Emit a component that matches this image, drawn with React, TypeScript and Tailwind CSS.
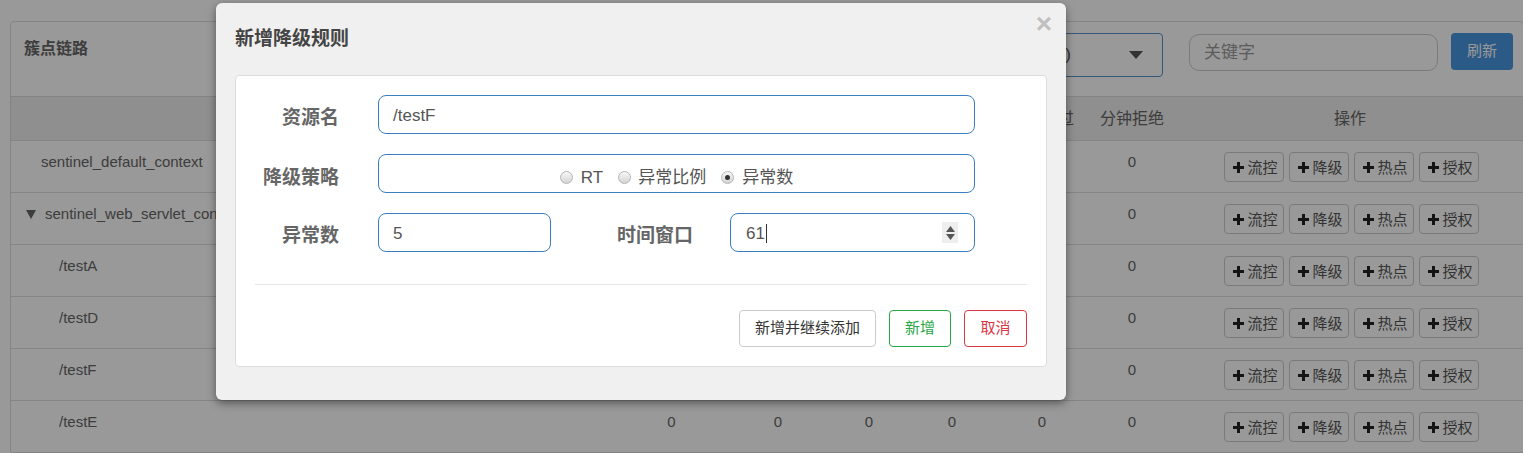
import React from "react";

const FONT = { fontFamily: '"Liberation Sans", "Noto Sans CJK SC", sans-serif' };

function PlusIcon() {
  return (
    <svg width="11" height="11" viewBox="0 0 11 11" className="shrink-0">
      <rect x="4" y="0" width="3" height="11" fill="#222" />
      <rect x="0" y="4" width="11" height="3" fill="#222" />
    </svg>
  );
}

function ActionBtn({ label }: { label: string }) {
  return (
    <div className="flex h-[30px] w-[60px] items-center gap-[4px] rounded-[4px] border border-[#ccc] bg-white pl-[8px] text-[15px] text-[#555]">
      <PlusIcon />
      <span className="leading-none">{label}</span>
    </div>
  );
}

type Row = { name: string; indent: "root" | "tree" | "child"; hidden: boolean };

const rows: Row[] = [
  { name: "sentinel_default_context", indent: "root", hidden: true },
  { name: "sentinel_web_servlet_context", indent: "tree", hidden: true },
  { name: "/testA", indent: "child", hidden: true },
  { name: "/testD", indent: "child", hidden: true },
  { name: "/testF", indent: "child", hidden: true },
  { name: "/testE", indent: "child", hidden: false },
];

const GRID = "grid grid-cols-[607px_107px_106px_76px_90px_90px_90px_1fr]";

function Radio({ checked }: { checked?: boolean }) {
  return (
    <span className="relative inline-flex h-[13px] w-[13px] shrink-0 items-center justify-center rounded-full border border-[#b5b5b5] bg-gradient-to-b from-[#f7f7f7] to-[#d4d4d4]">
      {checked && <span className="h-[5px] w-[5px] rounded-full bg-[#333]" />}
    </span>
  );
}

function Spinner() {
  return (
    <div className="absolute right-[16px] top-[8px] flex h-[21px] w-[16px] flex-col items-center justify-center gap-[2px] bg-[#eee]">
      <svg width="9" height="6" viewBox="0 0 9 6">
        <path d="M4.5 0 L9 6 L0 6 Z" fill="#555" />
      </svg>
      <svg width="9" height="6" viewBox="0 0 9 6">
        <path d="M0 0 L9 0 L4.5 6 Z" fill="#555" />
      </svg>
    </div>
  );
}

export default function App() {
  return (
    <div className="relative h-[453px] w-[1523px] overflow-hidden bg-white" style={FONT}>
      {/* background page */}
      <div className="pl-[10px] pt-[21px]">
        <div className="w-[1514px] rounded-[4px] border border-[#ddd] bg-white">
          <div className="flex h-[75px] items-start justify-between border-b border-[#ddd]">
            <div className="pl-[13px] pt-[16px] text-[16px] font-bold leading-[22px] text-[#666]">簇点链路</div>
            <div className="flex items-start pr-[10px] pt-[11px]">
              <div className="flex h-[44px] w-[300px] items-center justify-end rounded-[4px] border border-[#5791cc] pr-[19px] text-[17px] text-[#555]">
                <span className="mr-[58px] whitespace-nowrap">default (0.0.0.0:8720)</span>
                <svg width="14" height="8" viewBox="0 0 14 8" className="shrink-0">
                  <path d="M0 0 L14 0 L7 8 Z" fill="#555" />
                </svg>
              </div>
              <div className="ml-[26px] mt-[1px] flex h-[37px] w-[249px] items-center rounded-[10px] border border-[#ccc] pl-[14px] text-[17px] text-[#999]">
                关键字
              </div>
              <div className="ml-[13px] flex h-[37px] w-[62px] items-center justify-center rounded-[4px] bg-[#4896df] text-[15px] text-white">
                刷新
              </div>
            </div>
          </div>
          <div className={`${GRID} h-[44px] items-center border-b border-[#ddd] bg-[#eee] text-center text-[16px] text-[#666]`}>
            <div />
            <div />
            <div />
            <div />
            <div />
            <div>分钟通过</div>
            <div>分钟拒绝</div>
            <div>操作</div>
          </div>
          {rows.map((r) => (
            <div key={r.name} className={`${GRID} h-[52px] border-b border-[#ddd] text-[15px] leading-[20px] text-[#666]`}>
              <div
                className={`flex items-start whitespace-nowrap pt-[11px] ${
                  r.indent === "root" ? "pl-[30px]" : r.indent === "tree" ? "pl-[15px]" : "pl-[48px]"
                }`}
              >
                {r.indent === "tree" && (
                  <svg width="10" height="9" viewBox="0 0 10 9" className="mr-[9px] mt-[6px] shrink-0">
                    <path d="M0 0 L10 0 L5 9 Z" fill="#666" />
                  </svg>
                )}
                {r.name}
              </div>
              {[0, 1, 2, 3, 4].map((i) => (
                <div key={i} className="pt-[11px] text-center">{r.hidden ? "" : "0"}</div>
              ))}
              <div className="pt-[11px] text-center">0</div>
              <div className="flex justify-center gap-[5px] pl-[2px] pt-[11px]">
                <ActionBtn label="流控" />
                <ActionBtn label="降级" />
                <ActionBtn label="热点" />
                <ActionBtn label="授权" />
              </div>
            </div>
          ))}
        </div>
      </div>

      {/* overlay */}
      <div className="absolute inset-0 bg-black/40" />

      {/* modal */}
      <div className="absolute left-[216px] top-[3px] h-[397px] w-[850px] rounded-[6px] bg-[#f0f0f0] shadow-[0_3px_9px_rgba(0,0,0,0.45)]">
        <div className="absolute right-[14px] top-[6px] text-[28px] font-bold leading-[30px] text-[#c0c0c0]">×</div>
        <div className="px-[19px] pt-[21px]">
          <div className="h-[30px] text-[19px] font-bold leading-[30px] text-[#444]">新增降级规则</div>
        </div>
        <div className="mx-[19px] mt-[21px] h-[292px] rounded-[4px] border border-[#ddd] bg-white pt-[19px]">
          <div className="flex flex-col gap-[20px]">
            <div className="flex h-[39px] items-center">
              <div className="w-[103px] pt-[8px] text-right text-[19px] font-bold text-[#666]">资源名</div>
              <div className="ml-[39px] flex h-[39px] w-[597px] items-center rounded-[8px] border border-[#3b7ec0] pl-[14px] pt-[2px] text-[17px] text-[#555]">
                /testF
              </div>
            </div>
            <div className="flex h-[39px] items-center">
              <div className="w-[103px] pt-[9px] text-right text-[19px] font-bold text-[#666]">降级策略</div>
              <div className="ml-[39px] flex h-[39px] w-[597px] items-center justify-center rounded-[8px] border border-[#3b7ec0] pt-[8px] text-[17px] text-[#555]">
                <Radio />
                <span className="ml-[8px] mr-[15px]">RT</span>
                <Radio />
                <span className="ml-[7px] mr-[15px]">异常比例</span>
                <Radio checked />
                <span className="ml-[8px]">异常数</span>
              </div>
            </div>
            <div className="flex h-[39px] items-center">
              <div className="w-[103px] pt-[8px] text-right text-[19px] font-bold text-[#666]">异常数</div>
              <div className="ml-[39px] flex h-[39px] w-[173px] items-center rounded-[8px] border border-[#3b7ec0] pl-[14px] pt-[2px] text-[17px] text-[#555]">
                5
              </div>
              <div className="w-[142px] pt-[8px] text-right text-[19px] font-bold text-[#666]">时间窗口</div>
              <div className="relative ml-[37px] flex h-[39px] w-[245px] items-center rounded-[8px] border border-[#3b7ec0] pl-[15px] pt-[2px] text-[17px] text-[#555]">
                61
                <span className="ml-[1px] h-[19px] w-px bg-[#333]" />
                <Spinner />
              </div>
            </div>
          </div>
          <div className="mx-[19px] mt-[32px] h-px bg-[#e5e5e5]" />
          <div className="mt-[25px] flex justify-end gap-[13px] pr-[19px] text-[15px]">
            <div className="flex h-[37px] w-[137px] items-center justify-center rounded-[4px] border border-[#ccc] text-[#333]">
              新增并继续添加
            </div>
            <div className="flex h-[37px] w-[62px] items-center justify-center rounded-[4px] border border-[#28a745] text-[#28a745]">
              新增
            </div>
            <div className="flex h-[37px] w-[63px] items-center justify-center rounded-[4px] border border-[#dc3545] text-[#dc3545]">
              取消
            </div>
          </div>
        </div>
      </div>
    </div>
  );
}
